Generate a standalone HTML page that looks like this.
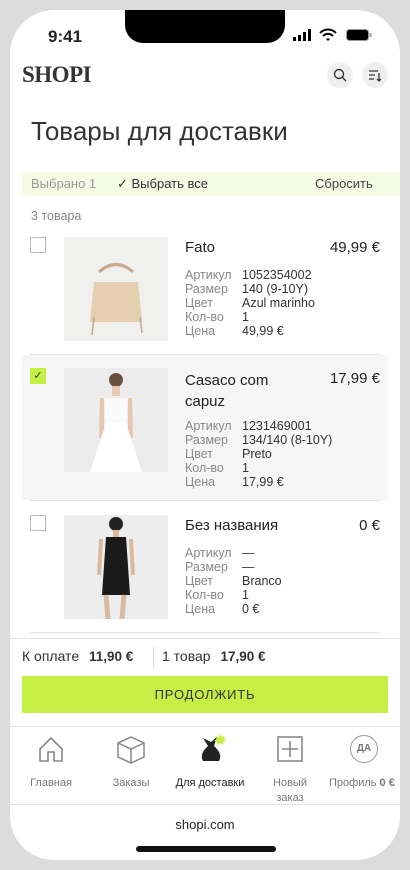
<!DOCTYPE html>
<html><head><meta charset="utf-8"><style>
*{margin:0;padding:0;box-sizing:border-box}
body{width:410px;height:870px;background:#fff;font-family:"Liberation Sans","DejaVu Sans",sans-serif;color:#222;position:relative;overflow:hidden}
.frame{position:absolute;left:0;top:0;width:410px;height:870px;border:10px solid #dcdcdc;border-radius:52px;pointer-events:none}
.bg{position:absolute;left:0;top:0;width:410px;height:870px;background:#dcdcdc}
.screen{position:absolute;left:10px;top:10px;width:390px;height:850px;background:#fff;border-radius:44px;overflow:hidden}
.a{position:absolute;white-space:nowrap}
.notch{position:absolute;left:115px;top:0;width:160px;height:33px;background:#000;border-radius:0 0 18px 18px}
.lbl{color:#888;font-size:12.5px;line-height:14px}
.val{color:#333;font-size:12.5px;line-height:14px}
.cb{position:absolute;width:16px;height:16px;border:1px solid #bbb;background:#fff}
.img{position:absolute;width:104px;height:104px;background:#efefef}
.name{font-size:15px;color:#222}
.price{font-size:15px;color:#222;text-align:right}
.nav{position:absolute;top:776px;font-size:11px;color:#777;text-align:center;width:80px;line-height:15px}
</style></head><body>
<div class="bg"></div>
<div class="screen">
<div class="notch"></div>
<div class="a" style="left:38px;top:17px;font-size:17px;font-weight:bold">9:41</div>
<svg class="a" style="left:283px;top:19px" width="20" height="12"><rect x="0" y="8" width="3" height="4" fill="#000"/><rect x="5" y="6" width="3" height="6" fill="#000"/><rect x="10" y="3" width="3" height="9" fill="#000"/><rect x="15" y="0" width="3" height="12" fill="#000"/></svg>
<svg class="a" style="left:309px;top:18px" width="18" height="14" viewBox="0 0 18 14"><path d="M1 5 A11 11 0 0 1 17 5" stroke="#000" stroke-width="2" fill="none"/><path d="M4 8 A7 7 0 0 1 14 8" stroke="#000" stroke-width="2" fill="none"/><path d="M7 11 L9 13 L11 11 A3 3 0 0 0 7 11Z" fill="#000"/></svg>
<svg class="a" style="left:336px;top:19px" width="26" height="12"><rect x="0.5" y="0.5" width="22" height="11" rx="3" fill="#000" stroke="#999"/><rect x="23.5" y="4" width="2" height="4" fill="#999"/></svg>
</div>
<div class="a" style="left:22px;top:62px;font-family:'Liberation Serif',serif;font-weight:bold;font-size:23px;letter-spacing:-0.5px;color:#333">SHOPI</div>
<div class="a" style="left:327px;top:62px;width:26px;height:26px;border-radius:50%;background:#efefef"></div>
<svg class="a" style="left:333px;top:68px" width="14" height="14"><circle cx="6" cy="6" r="4.5" stroke="#333" stroke-width="1.4" fill="none"/><path d="M9.5 9.5 L13 13" stroke="#333" stroke-width="1.4"/></svg>
<div class="a" style="left:362px;top:62px;width:26px;height:26px;border-radius:50%;background:#efefef"></div>
<svg class="a" style="left:368px;top:68px" width="14" height="14"><path d="M1 3H10M1 7H7M1 11H6M11 5V13M9 11L11 13L13 11" stroke="#333" stroke-width="1.3" fill="none"/></svg>
<div class="a" style="left:31px;top:116px;font-size:26px;color:#333">Товары для доставки</div>
<div class="a" style="left:22px;top:172px;width:378px;height:24px;background:#f5fae3"></div>
<div class="a" style="left:31px;top:176px;font-size:13px;color:#999">Выбрано 1</div>
<div class="a" style="left:117px;top:176px;font-size:13px;color:#333">✓ Выбрать все</div>
<div class="a" style="left:315px;top:176px;font-size:13px;color:#444">Сбросить</div>
<div class="a" style="left:31px;top:209px;font-size:12.5px;color:#888">3 товара</div>

<!-- item 1 -->
<div class="cb" style="left:30px;top:237px"></div>
<div class="img" style="left:64px;top:237px;background:#f0f0ef"><svg width="104" height="104"><path d="M35 35 Q52 20 69 35" stroke="#c9a98a" stroke-width="3" fill="none"/><path d="M30 45 L74 45 L78 85 L26 85Z" fill="#e6cfae"/><path d="M30 80 L28 98M76 80 L78 96" stroke="#c9a98a" stroke-width="1.5"/></svg></div>
<div class="a name" style="left:185px;top:239px">Fato</div>
<div class="a price" style="right:30px;top:239px">49,99 €</div>
<div class="a lbl" style="left:185px;top:268px">Артикул<br>Размер<br>Цвет<br>Кол-во<br>Цена</div>
<div class="a val" style="left:242px;top:268px">1052354002<br>140 (9-10Y)<br>Azul marinho<br>1<br>49,99 €</div>
<div class="a" style="left:30px;top:354px;width:350px;height:1px;background:#e4e4e4"></div>

<!-- item 2 -->
<div class="a" style="left:22px;top:355px;width:366px;height:145px;background:#f6f6f6;border-radius:3px"></div>
<div class="cb" style="left:30px;top:368px;background:#c6ef45;border-color:#c6ef45;font-size:11px;line-height:14px;text-align:center;color:#333">✓</div>
<div class="img" style="left:64px;top:368px;background:#ececec"><svg width="104" height="104"><circle cx="52" cy="12" r="7" fill="#6b5040"/><rect x="48" y="18" width="8" height="10" fill="#e8c8b0"/><path d="M40 30 L64 30 L62 55 L42 55Z" fill="#fafafa"/><path d="M36 30 L40 30 L40 70 L35 70ZM64 30 L68 30 L69 70 L64 70Z" fill="#e6c6ae"/><path d="M42 55 L62 55 L78 104 L26 104Z" fill="#fff"/></svg></div>
<div class="a name" style="left:185px;top:370px;line-height:21px">Casaco com<br>capuz</div>
<div class="a price" style="right:30px;top:370px">17,99 €</div>
<div class="a lbl" style="left:185px;top:419px">Артикул<br>Размер<br>Цвет<br>Кол-во<br>Цена</div>
<div class="a val" style="left:242px;top:419px">1231469001<br>134/140 (8-10Y)<br>Preto<br>1<br>17,99 €</div>
<div class="a" style="left:30px;top:500px;width:350px;height:1px;background:#e4e4e4"></div>

<!-- item 3 -->
<div class="cb" style="left:30px;top:515px"></div>
<div class="img" style="left:64px;top:515px;background:#ededed"><svg width="104" height="104"><circle cx="52" cy="9" r="7" fill="#222"/><rect x="49" y="15" width="6" height="8" fill="#d9b9a0"/><path d="M42 22 L62 22 L66 80 L38 80Z" fill="#1a1a1a"/><path d="M42 80 L44 104M60 80 L58 104" stroke="#d9b9a0" stroke-width="5"/><path d="M37 24 L35 60M67 24 L69 60" stroke="#d9b9a0" stroke-width="4"/></svg></div>
<div class="a name" style="left:185px;top:517px">Без названия</div>
<div class="a price" style="right:30px;top:517px">0 €</div>
<div class="a lbl" style="left:185px;top:546px">Артикул<br>Размер<br>Цвет<br>Кол-во<br>Цена</div>
<div class="a val" style="left:242px;top:546px">—<br>—<br>Branco<br>1<br>0 €</div>
<div class="a" style="left:30px;top:632px;width:350px;height:1px;background:#e4e4e4"></div>
<div class="a" style="left:10px;top:638px;width:390px;height:1px;background:#e4e4e4"></div>

<div class="a" style="left:22px;top:648px;font-size:14px;color:#333">К оплате <b style="margin-left:6px;font-size:13.5px">11,90 €</b></div>
<div class="a" style="left:153px;top:647px;width:1px;height:22px;background:#ddd"></div>
<div class="a" style="left:162px;top:648px;font-size:14px;color:#333">1 товар <b style="margin-left:6px;font-size:13.5px">17,90 €</b></div>
<div class="a" style="left:22px;top:676px;width:366px;height:37px;background:#c6ef45;text-align:center;line-height:37px;font-size:13px;letter-spacing:0.8px;color:#333">ПРОДОЛЖИТЬ</div>
<div class="a" style="left:10px;top:726px;width:390px;height:1px;background:#e4e4e4"></div>

<svg class="a" style="left:37px;top:735px" width="28" height="28"><path d="M3 14 L14 3 L25 14 V26 H17 V17 H11 V26 H3Z" stroke="#888" stroke-width="1.6" fill="none"/></svg>
<svg class="a" style="left:116px;top:735px" width="30" height="30"><path d="M15 2 L28 8 V22 L15 28 L2 22 V8Z M2 8 L15 14 L28 8 M15 14 V28" stroke="#888" stroke-width="1.5" fill="none"/></svg>
<svg class="a" style="left:195px;top:732px" width="32" height="32"><path d="M8 6 L16 10 L22 5 L19 14 Q28 22 24 29 H8 Q4 22 13 14Z" fill="#222"/><path d="M25 2 L27 5 L30 4 L29 7 L31 9 L28 10 L28 13 L25 11 L22 13 L22 10 L19 9 L22 7 L21 4 L24 5Z" fill="#c6ef45"/></svg>
<svg class="a" style="left:276px;top:735px" width="28" height="28"><rect x="2" y="2" width="24" height="24" stroke="#888" stroke-width="1.6" fill="none"/><path d="M14 6V22M6 14H22" stroke="#888" stroke-width="1.6"/></svg>
<div class="a" style="left:350px;top:735px;width:28px;height:28px;border:1.5px solid #999;border-radius:50%;font-size:10px;font-weight:bold;color:#777;text-align:center;line-height:25px">ДА</div>
<div class="nav" style="left:11px">Главная</div>
<div class="nav" style="left:91px">Заказы</div>
<div class="nav" style="left:170px;color:#222;width:80px">Для доставки</div>
<div class="nav" style="left:250px">Новый<br>заказ</div>
<div class="nav" style="left:324px;width:86px;text-align:left;padding-left:5px">Профиль <b>0 €</b></div>
<div class="a" style="left:10px;top:804px;width:390px;height:1px;background:#e4e4e4"></div>
<div class="a" style="left:0;width:410px;text-align:center;top:817px;font-size:13px;color:#222">shopi.com</div>
<div class="a" style="left:136px;top:846px;width:140px;height:6px;border-radius:3px;background:#111"></div>
</body></html>
